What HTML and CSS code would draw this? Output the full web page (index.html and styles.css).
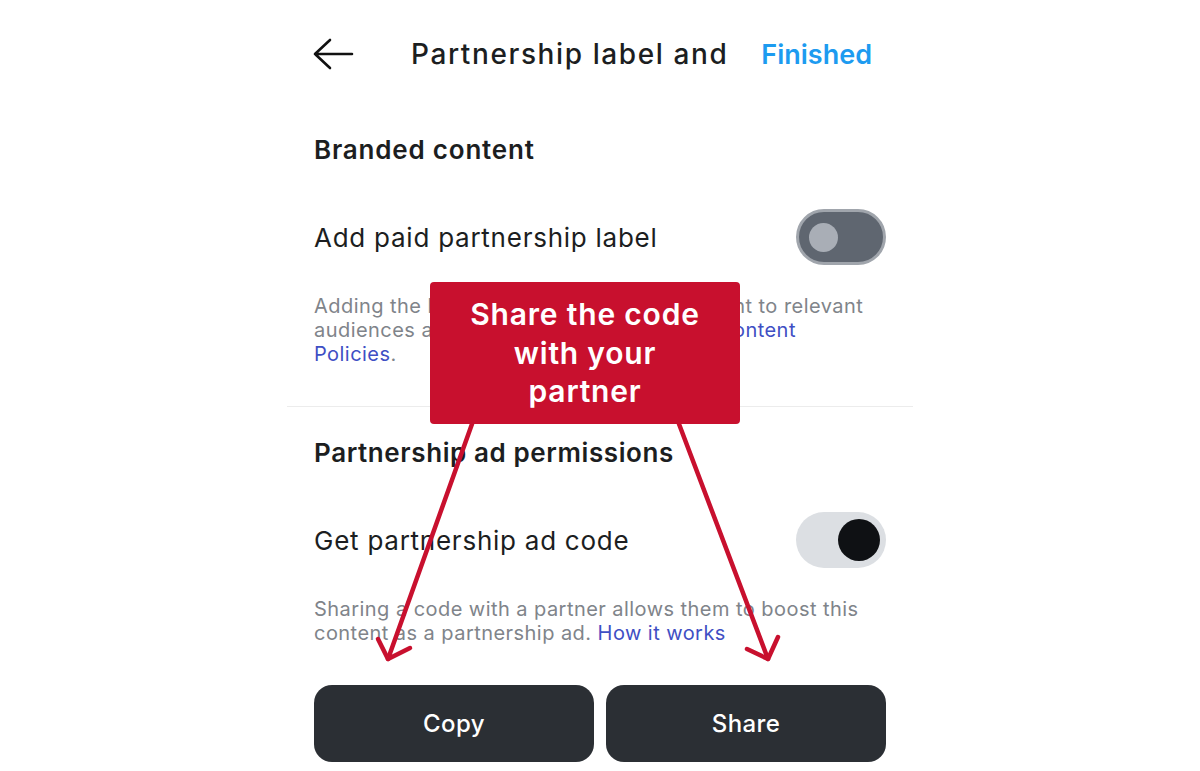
FILE: index.html
```html
<!DOCTYPE html>
<html lang="en">
<head>
    <meta charset="UTF-8">
    <meta name="viewport" content="width=device-width, initial-scale=1.0">
    <title>Partnership label and ads</title>
    <link rel="stylesheet" href="styles.css">
</head>
<body>
    <div class="screen">
        <header class="topbar">
            <svg class="back" width="44" height="40" viewBox="0 0 44 40">
                <path d="M2 20 H39 M17 6 L2 20 L17 34" fill="none" stroke="#111" stroke-width="2.6" stroke-linecap="round" stroke-linejoin="round"/>
            </svg>
            <h1 class="title">Partnership label and</h1>
            <a class="done" href="#">Finished</a>
        </header>

        <section class="group">
            <h2>Branded content</h2>
            <div class="row">
                <span>Add paid partnership label</span>
                <span class="switch off"><span class="knob"></span></span>
            </div>
            <p class="note">Adding the label helps us show your content to relevant<br>audiences and is subject to our <a href="#">Branded Content<br>Policies</a>.</p>
        </section>

        <hr class="divider">

        <section class="group second">
            <h2>Partnership ad permissions</h2>
            <div class="row">
                <span>Get partnership ad code</span>
                <span class="switch on"><span class="knob"></span></span>
            </div>
            <p class="note">Sharing a code with a partner allows them to boost this<br>content as a partnership ad. <a href="#">How it works</a></p>
        </section>

        <div class="actions">
            <button>Copy</button>
            <button>Share</button>
        </div>

        <div class="callout">Share the code<br>with your<br>partner</div>

        <svg class="arrows" width="626" height="771" viewBox="0 0 626 771">
            <g fill="none" stroke="#c8102e" stroke-width="4.5" stroke-linecap="round" stroke-linejoin="round">
                <path d="M185 424 L101 659"/>
                <path d="M91 639 L101 659 L123 648"/>
                <path d="M392 424 L481 659"/>
                <path d="M460 649 L481 659 L491 637"/>
            </g>
        </svg>
    </div>
</body>
</html>
```

FILE: styles.css
```css
body {
    margin: 0;
    background: #fff;
    font-family: Inter, "Noto Sans", sans-serif;
    color: #1c1e21;
}
.screen {
    position: relative;
    width: 626px;
    height: 771px;
    margin: 0 auto;
    overflow: hidden;
}
.topbar {
    height: 108px;
    display: flex;
    align-items: center;
    padding: 0 41px 0 26px;
}
.back {
    flex: none;
}
.title {
    flex: 1;
    margin: 0 0 0 54px;
    font-size: 28px;
    font-weight: 500;
    letter-spacing: 1.6px;
}
.done {
    color: #1d9bf0;
    font-size: 27px;
    font-weight: 600;
    text-decoration: none;
}
.group {
    padding: 0 27px;
}
.group h2 {
    margin: 26px 0 0;
    font-size: 26px;
    line-height: 32px;
    font-weight: 600;
    letter-spacing: 0.8px;
}
.group.second h2 {
    margin-top: 30px;
    letter-spacing: 0.6px;
}
.row {
    margin-top: 43px;
    height: 56px;
    display: flex;
    align-items: center;
    justify-content: space-between;
    font-size: 26px;
    letter-spacing: 0.75px;
}
.switch {
    box-sizing: border-box;
    width: 90px;
    height: 56px;
    border-radius: 28px;
    display: flex;
    align-items: center;
}
.switch.off {
    background: #5f6670;
    border: 3px solid #a0a5ac;
    padding-left: 10px;
}
.switch.off .knob {
    width: 29px;
    height: 29px;
    border-radius: 50%;
    background: #a9aeb6;
}
.switch.on {
    background: #dcdfe3;
    justify-content: flex-end;
    padding-right: 6px;
}
.switch.on .knob {
    width: 42px;
    height: 42px;
    border-radius: 50%;
    background: #0f1114;
}
.note {
    margin: 29px 0 0;
    font-size: 20px;
    line-height: 24px;
    letter-spacing: 0.45px;
    color: #80848a;
}
.note a {
    color: #3f4fc4;
    text-decoration: none;
}
.divider {
    margin: 40px 0 0;
    border: none;
    border-top: 1px solid #ececec;
}
.actions {
    margin-top: 40px;
    padding: 0 27px;
    display: grid;
    grid-template-columns: 1fr 1fr;
    gap: 12px;
}
.actions button {
    height: 77px;
    border: none;
    border-radius: 18px;
    background: #2b2f34;
    color: #fff;
    font-family: inherit;
    font-size: 24px;
    font-weight: 500;
    letter-spacing: 0.4px;
}
.callout {
    position: absolute;
    left: 143px;
    top: 282px;
    box-sizing: border-box;
    width: 310px;
    height: 142px;
    padding: 13px 6px 0;
    background: #c8102e;
    border-radius: 4px;
    color: #fff;
    font-size: 30px;
    line-height: 38.5px;
    font-weight: 600;
    letter-spacing: 0.8px;
    text-align: center;
}
.arrows {
    position: absolute;
    left: 0;
    top: 0;
    pointer-events: none;
}
```
